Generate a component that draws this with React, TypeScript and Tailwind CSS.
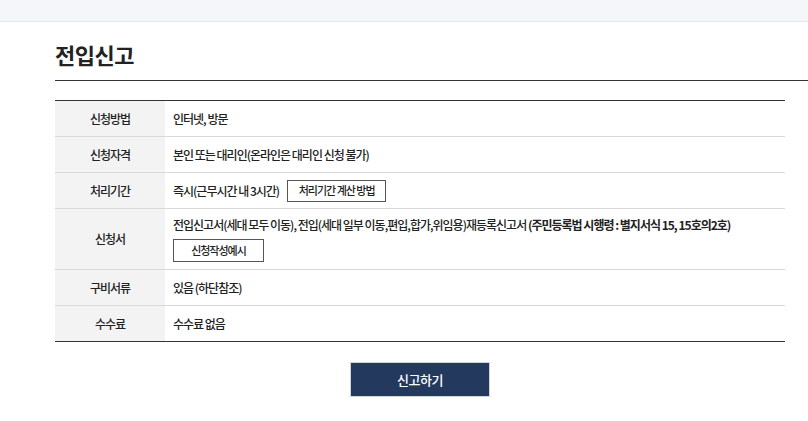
import React from "react";

const font = { fontFamily: '"Noto Sans CJK KR", "Noto Sans", sans-serif' };

function Row({ label, children, tall = false, last = false }: { label: string; children: React.ReactNode; tall?: boolean; last?: boolean }) {
  return (
    <div className={`flex ${last ? "" : "border-b border-[#d9d9d9]"}`}>
      <div className="w-[110px] shrink-0 bg-[#f3f3f3] flex items-center justify-center text-[12px] text-[#222] tracking-[-1px] font-medium">
        {label}
      </div>
      <div className={`flex-1 pl-[8px] text-[12px] text-[#222] tracking-[-1px] font-medium ${tall ? "py-[7px]" : "h-[35px] flex items-center"}`}>
        {children}
      </div>
    </div>
  );
}

export default function App() {
  return (
    <div className="w-[808px] h-[421px] bg-white overflow-hidden" style={font}>
      <div className="h-[22px] bg-[#f5f6fa] border-b border-[#e5e6eb]" />
      <div className="ml-[55px]">
        <div className="mt-[17px] pb-[11px] border-b border-[#333]">
          <h1 className="text-[22px] leading-[30px] font-bold text-[#222] tracking-[-0.5px]">전입신고</h1>
        </div>
        <div className="w-[730px] mt-[19px] border-t border-b border-[#333]">
          <Row label="신청방법">인터넷, 방문</Row>
          <Row label="신청자격">본인 또는 대리인(온라인은 대리인 신청 불가)</Row>
          <Row label="처리기간">
            <span>즉시(근무시간 내 3시간)</span>
            <span className="ml-[8px] w-[99px] h-[22px] border border-[#555] flex items-center justify-center text-[11px]">
              처리기간 계산 방법
            </span>
          </Row>
          <Row label="신청서" tall>
            <div className="leading-[18px] whitespace-nowrap">
              전입신고서(세대 모두 이동), 전입(세대 일부 이동,편입,합가,위임용)재등록신고서{" "}
              <b className="font-bold">(주민등록법 시행령 : 별지서식 15, 15호의2호)</b>
            </div>
            <div className="mt-[5px] w-[91px] h-[23px] border border-[#555] flex items-center justify-center text-[11px]">
              신청작성예시
            </div>
          </Row>
          <Row label="구비서류">있음 (하단참조)</Row>
          <Row label="수수료" last>수수료 없음</Row>
        </div>
        <div className="w-[730px] flex justify-center mt-[20px]">
          <button className="w-[140px] h-[35px] bg-[#233a5e] border border-[#d0d3d8] text-white text-[13px] font-medium tracking-[-0.5px]">
            신고하기
          </button>
        </div>
      </div>
    </div>
  );
}
